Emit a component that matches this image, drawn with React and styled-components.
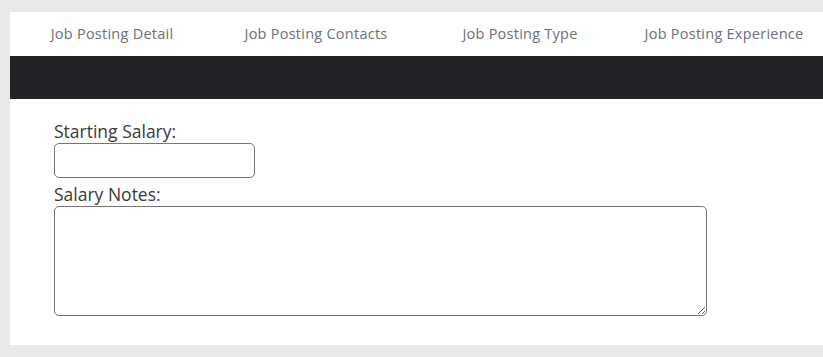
import React from 'react';
import styled, { createGlobalStyle } from 'styled-components';

const GlobalStyle = createGlobalStyle`
  html, body {
    margin: 0;
    padding: 0;
    background: #e9e9e9;
    overflow: hidden;
    font-family: "Open Sans", "Noto Sans", sans-serif;
  }
`;

const Page = styled.div`
  padding: 12px 0 12px 10px;
`;

const Panel = styled.div`
  width: 830px;
  background: #ffffff;
`;

const Tabs = styled.nav`
  display: grid;
  grid-template-columns: repeat(4, 204px);
  height: 44px;
`;

const Tab = styled.a`
  display: flex;
  align-items: center;
  justify-content: center;
  padding-bottom: 1px;
  font-size: 14.5px;
  letter-spacing: 0.25px;
  color: #6d7076;
  text-decoration: none;
  cursor: pointer;
`;

const DarkBar = styled.div`
  height: 43px;
  background: #212327;
`;

const Form = styled.form`
  display: flex;
  flex-direction: column;
  align-items: flex-start;
  padding: 20px 44px 29px;
`;

const Label = styled.label`
  font-size: 17.5px;
  line-height: 24px;
  color: #3a3a3a;
`;

const Input = styled.input`
  box-sizing: border-box;
  width: 201px;
  height: 35px;
  margin: 0 0 4px;
  border: 1px solid #767676;
  border-radius: 5px;
  font: inherit;
`;

const TextArea = styled.textarea`
  box-sizing: border-box;
  width: 653px;
  height: 110px;
  margin: 0;
  border: 1px solid #767676;
  border-radius: 5px;
  font: inherit;
`;

const tabs = [
  'Job Posting Detail',
  'Job Posting Contacts',
  'Job Posting Type',
  'Job Posting Experience',
];

export default function App() {
  return (
    <>
      <GlobalStyle />
      <Page>
        <Panel>
          <Tabs>
            {tabs.map((t) => (
              <Tab key={t}>{t}</Tab>
            ))}
          </Tabs>
          <DarkBar />
          <Form>
            <Label htmlFor="salary">Starting Salary:</Label>
            <Input id="salary" type="text" />
            <Label htmlFor="notes">Salary Notes:</Label>
            <TextArea id="notes" />
          </Form>
        </Panel>
      </Page>
    </>
  );
}
